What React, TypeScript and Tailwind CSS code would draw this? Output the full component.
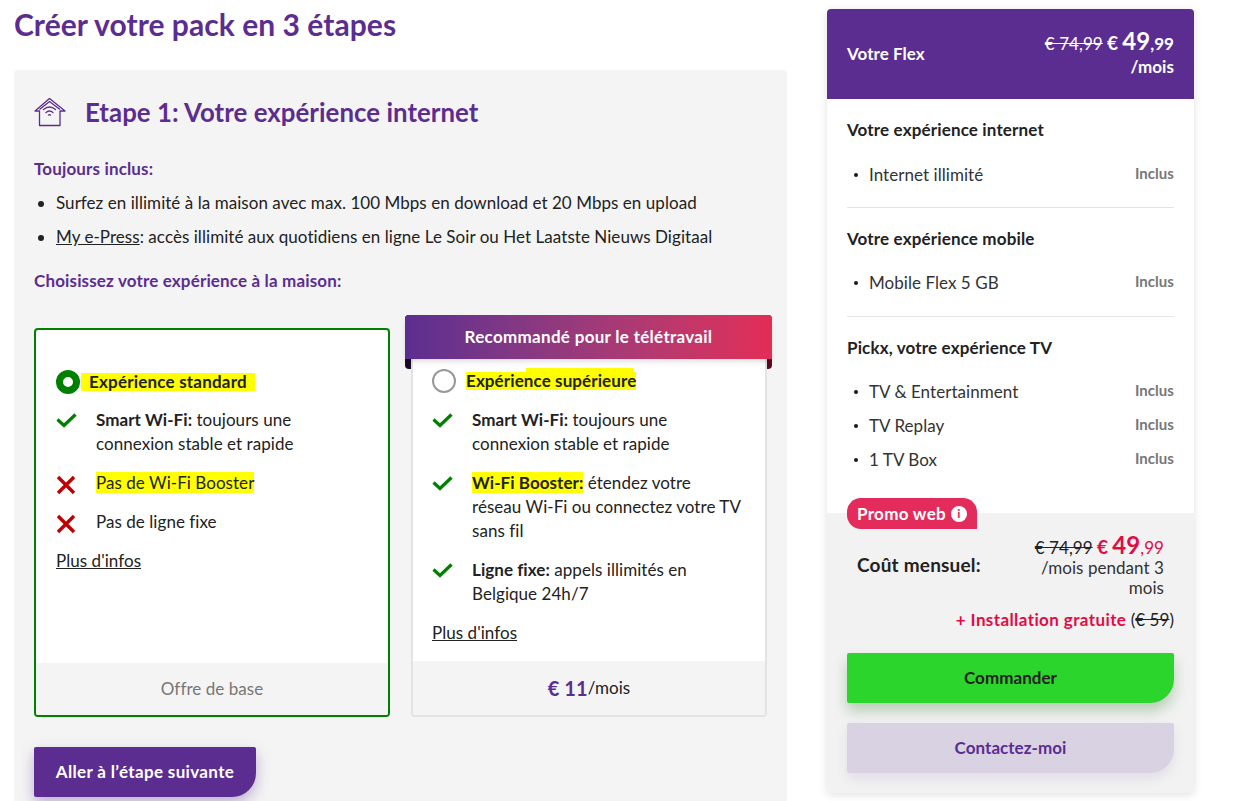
import React from 'react';

const Check = () => (
  <svg className="mt-1 w-[21px] h-[16px] shrink-0" viewBox="0 0 21 16" fill="none">
    <path d="M1.5 7.5 L8 13.5 L19.5 2.5" stroke="#008000" strokeWidth="3.2" />
  </svg>
);

const Cross = () => (
  <svg className="mt-1 w-[20px] h-[20px] shrink-0" viewBox="0 0 20 20" fill="none">
    <path d="M2 2 L18 18 M18 2 L2 18" stroke="#c00000" strokeWidth="3.4" />
  </svg>
);

const HomeWifi = () => (
  <svg className="w-[32px] h-[30px] shrink-0" viewBox="0 0 32 30" fill="none" stroke="#5c2d91" strokeWidth="1.3">
    <path d="M5.5 28.5 V14 H1 L15.5 1.5 L31 14 H26 V28.5 Z" strokeLinejoin="round" />
    <path d="M5.5 12.5 L15.5 4.5 L26 12.5" />
    <path d="M9.5 12.5 Q15.5 7.5 21.5 12.5 M12 15.5 Q15.5 12.5 19 15.5 M14.5 18 Q15.5 17.2 16.5 18" strokeLinecap="round" />
  </svg>
);

const Feature = ({ icon, children }: { icon: React.ReactNode; children: React.ReactNode }) => (
  <div className="flex items-start">
    <div className="w-[40px] shrink-0">{icon}</div>
    <p className="leading-[24px]">{children}</p>
  </div>
);

const SummaryRow = ({ label }: { label: string }) => (
  <div className="flex items-center justify-between h-[34px]">
    <div className="flex items-center pl-[7px]">
      <span className="w-[4px] h-[4px] rounded-full bg-[#1a1a1a] mr-[11px]" />
      <span className="text-[#333]">{label}</span>
    </div>
    <span className="text-[15px] font-bold text-[#777] -mt-[4px]">Inclus</span>
  </div>
);

export default function App() {
  return (
    <div className="h-[801px] w-[1236px] overflow-hidden bg-white flex text-[17px] tracking-[0.05px] text-[#222] font-['Lato','Noto_Sans',sans-serif]">
      <div className="w-[773px] ml-[14px] shrink-0">
        <h1 className="h-[70px] pt-[6px] text-[30px] leading-[36px] font-bold text-[#5c2d91]">Créer votre pack en 3 étapes</h1>

        <div className="bg-[#f4f4f4] rounded-t-[4px] px-[20px] pt-[25px] h-[760px]">
          <div className="flex items-center gap-[19px] h-[34px]">
            <HomeWifi />
            <h2 className="text-[25.8px] font-bold text-[#5c2d91]">Etape 1: Votre expérience internet</h2>
          </div>

          <p className="mt-[28px] font-bold tracking-[0.15px] text-[#5c2d91] leading-[24px]">Toujours inclus:</p>
          <ul className="mt-[5px] ml-[22px] list-disc leading-[34px]">
            <li>Surfez en illimité à la maison avec max. 100 Mbps en download et 20 Mbps en upload</li>
            <li><span className="underline">My e-Press</span>: accès illimité aux quotidiens en ligne Le Soir ou Het Laatste Nieuws Digitaal</li>
          </ul>
          <p className="mt-[15px] font-bold tracking-[0.15px] text-[#5c2d91] leading-[24px]">Choisissez votre expérience à la maison:</p>

          <div className="mt-[35px] flex gap-[21px] items-end">
            <div className="w-[356px] h-[389px] bg-white border-2 border-[#008000] rounded-[4px] flex flex-col overflow-hidden">
              <div className="flex-1 px-[20px] pt-[40px]">
                <div className="flex items-center h-[24px]">
                  <span className="w-[24px] h-[24px] rounded-full border-[7px] border-[#008000] bg-white shrink-0" />
                  <span className="ml-[1px] bg-[#ffff00] px-[8px] font-bold tracking-[0.2px] leading-[18px]">Expérience standard</span>
                </div>
                <div className="mt-[14px] flex flex-col gap-[15px]">
                  <Feature icon={<Check />}><b>Smart Wi-Fi:</b> toujours une<br />connexion stable et rapide</Feature>
                  <Feature icon={<Cross />}><span className="bg-[#ffff00]">Pas de Wi-Fi Booster</span></Feature>
                  <Feature icon={<Cross />}>Pas de ligne fixe</Feature>
                </div>
                <a className="block mt-[15px] underline leading-[24px]">Plus d'infos</a>
              </div>
              <div className="h-[52px] bg-[#f4f4f4] flex items-center justify-center text-[#777]">Offre de base</div>
            </div>

            <div className="relative w-[356px] h-[358px] bg-white border-2 border-t-0 border-[#e3e3e3] rounded-b-[4px] flex flex-col">
              <div className="absolute -top-[44px] -left-[8px] w-[367px] h-[54px] bg-gradient-to-r from-[#1c0a26] to-[#5a0a25] rounded-[4px]" />
              <div className="absolute top-0 -inset-x-[2px] h-[12px] bg-white border-x-2 border-[#e3e3e3]" />
              <div className="absolute -top-[44px] -left-[8px] w-[367px] h-[44px] rounded-t-[4px] bg-gradient-to-r from-[#5c2d91] to-[#e32c56] flex items-center justify-center text-white font-bold tracking-[0.3px] shadow-md">
                Recommandé pour le télétravail
              </div>
              <div className="relative flex-1 pl-[19px] pr-[20px] pt-[10px]">
                <div className="flex items-center h-[24px]">
                  <span className="w-[24px] h-[24px] rounded-full border-2 border-[#999] bg-white shrink-0" />
                  <span className="relative ml-[10px] bg-[#ffff00] font-bold tracking-[0.1px] leading-[18px]">
                    <span className="absolute -top-[4px] left-[35%] right-[3px] h-[5px] bg-[#ffff00]" />
                    <span className="relative">Expérience supérieure</span>
                  </span>
                </div>
                <div className="mt-[15px] flex flex-col gap-[15px]">
                  <Feature icon={<Check />}><b>Smart Wi-Fi:</b> toujours une<br />connexion stable et rapide</Feature>
                  <Feature icon={<Check />}><b className="bg-[#ffff00]">Wi-Fi Booster:</b> étendez votre<br />réseau Wi-Fi ou connectez votre TV<br />sans fil</Feature>
                  <Feature icon={<Check />}><b>Ligne fixe:</b> appels illimités en<br />Belgique 24h/7</Feature>
                </div>
                <a className="block mt-[15px] underline leading-[24px]">Plus d'infos</a>
              </div>
              <div className="h-[54px] bg-[#f4f4f4] rounded-b-[2px] flex items-center justify-center">
                <span className="text-[#5c2d91] font-bold text-[20px]">€ 11</span><span>/mois</span>
              </div>
            </div>
          </div>

          <button className="mt-[30px] h-[50px] w-[222px] bg-[#5c2d91] text-white font-bold tracking-[0.35px] rounded-[2px] rounded-br-[24px] shadow-[0_6px_14px_rgba(92,45,145,0.35)]">
            Aller à l’étape suivante
          </button>
        </div>
      </div>

      <aside className="ml-[40px] mt-[9px] w-[367px] h-[784px] shrink-0 rounded-[4px] shadow-[0_2px_8px_rgba(0,0,0,0.12)] flex flex-col">
        <div className="h-[90px] bg-[#5c2d91] rounded-t-[4px] px-[20px] flex items-center justify-between text-white font-bold">
          <span>Votre Flex</span>
          <div className="text-right leading-[25px]">
            <div className="h-[25px]"><span className="line-through font-normal">€ 74,99</span> <span className="text-[19px]">€</span> <span className="text-[24px] leading-none">49</span>,99</div>
            <div>/mois</div>
          </div>
        </div>

        <div className="bg-white px-[20px] h-[414px]">
          <p className="pt-[19px] font-bold tracking-[0.15px] leading-[24px]">Votre expérience internet</p>
          <div className="mt-[16px]"><SummaryRow label="Internet illimité" /></div>
          <div className="mt-[15px] border-t border-[#e3e3e3]" />
          <p className="pt-[19px] font-bold tracking-[0.15px] leading-[24px]">Votre expérience mobile</p>
          <div className="mt-[15px]"><SummaryRow label="Mobile Flex 5 GB" /></div>
          <div className="mt-[16px] border-t border-[#e3e3e3]" />
          <p className="pt-[19px] font-bold tracking-[0.15px] leading-[24px]">Pickx, votre expérience TV</p>
          <div className="mt-[15px]">
            <SummaryRow label="TV & Entertainment" />
            <SummaryRow label="TV Replay" />
            <SummaryRow label="1 TV Box" />
          </div>
        </div>

        <div className="relative flex-1 bg-[#f2f2f2] rounded-b-[4px] px-[20px]">
          <div className="absolute -top-[15px] left-[20px] h-[31px] w-[130px] bg-[#e32c5b] rounded-t-[14px] rounded-bl-[14px] flex items-center justify-center gap-[5px] text-white font-bold tracking-[0.3px]">
            Promo web
            <span className="w-[16px] h-[16px] rounded-full bg-white text-[#e32c5b] text-[12px] leading-[16px] text-center font-black">i</span>
          </div>

          <div className="flex items-center justify-between pt-[20px] pl-[10px] pr-[10px]">
            <span className="font-bold text-[19px] tracking-[0.2px]">Coût mensuel:</span>
            <div className="text-right leading-[20px]">
              <div className="h-[25px] leading-[25px]"><span className="line-through">€ 74,99</span> <span className="text-[#e30a45] font-bold"><span className="text-[19px]">€</span> <span className="text-[24px] leading-none">49</span></span><span className="text-[#e30a45]">,99</span></div>
              <div className="text-[#333]">/mois pendant 3<br />mois</div>
            </div>
          </div>

          <p className="mt-[10px] text-right leading-[24px]">
            <span className="text-[#e30a45] font-bold tracking-[0.4px]">+ Installation gratuite</span> (<span className="line-through">€ 59</span>)
          </p>

          <button className="mt-[21px] h-[50px] w-full bg-[#2bd52b] font-bold rounded-[2px] rounded-br-[24px] shadow-[0_8px_14px_rgba(0,100,0,0.25)]">Commander</button>
          <button className="mt-[20px] h-[50px] w-full bg-[#d8d2e2] text-[#5c2d91] font-bold rounded-[2px] rounded-br-[24px] shadow-[0_6px_12px_rgba(92,45,145,0.1)]">Contactez-moi</button>
        </div>
      </aside>
    </div>
  );
}
